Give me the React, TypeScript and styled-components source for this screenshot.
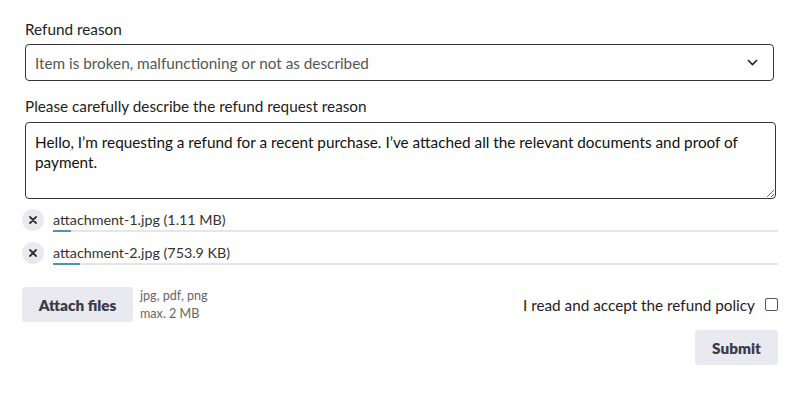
import { createGlobalStyle, styled } from "styled-components";

const GlobalStyle = createGlobalStyle`
  html, body {
    margin: 0;
    padding: 0;
    background: #ffffff;
  }
  body {
    font-family: "Lato", "Noto Sans", sans-serif;
    color: #222;
  }
`;

const Form = styled.form`
  width: 756px;
  padding: 19px 0 0 22px;
  display: flex;
  flex-direction: column;
`;

const Label = styled.label`
  display: block;
  margin-left: 3px;
  font-size: 15.3px;
  line-height: 20px;
  color: #222;
`;

const SelectBox = styled.div`
  position: relative;
  margin: 5px 0 15px 3px;
  width: 749px;
  height: 37px;
  box-sizing: border-box;
  border: 1px solid #3a3535;
  border-radius: 4px;
  display: flex;
  align-items: center;
  padding: 0 9px;
  font-size: 15.3px;
  color: #555;
`;

const Chevron = styled.svg`
  margin-left: auto;
  margin-right: 6px;
`;

const TextArea = styled.textarea`
  margin: 6px 0 10px 3px;
  width: 751px;
  height: 77px;
  box-sizing: border-box;
  border: 1px solid #3a3535;
  border-radius: 4px;
  padding: 9px 9px;
  font-family: inherit;
  font-size: 15.3px;
  line-height: 20px;
  color: #111;
  resize: vertical;
  outline: none;
`;

const FileList = styled.ul`
  list-style: none;
  margin: 0;
  padding: 0;
  display: flex;
  flex-direction: column;
  gap: 10px;
`;

const FileRow = styled.li`
  display: flex;
  align-items: flex-start;
  gap: 9px;
`;

const RemoveButton = styled.button`
  width: 22px;
  height: 22px;
  flex: none;
  border: none;
  border-radius: 50%;
  background: #e9e9ef;
  padding: 0;
  display: flex;
  align-items: center;
  justify-content: center;
  cursor: pointer;
`;

const FileInfo = styled.div`
  flex: 1;
  display: flex;
  flex-direction: column;
`;

const FileName = styled.span`
  font-size: 14.3px;
  line-height: 21px;
  color: #333;
`;

const Track = styled.div`
  height: 2px;
  background: #e6e6e6;
`;

const Progress = styled.div`
  height: 2px;
  background: #4b94b2;
`;

const ActionRow = styled.div`
  margin-top: 22px;
  height: 35px;
  display: flex;
  align-items: flex-start;
`;

const GreyButton = styled.button`
  height: 35px;
  border: none;
  border-radius: 3px;
  background: #e9e9f0;
  font-family: inherit;
  font-weight: 800;
  font-size: 15.3px;
  color: #3b3b48;
  cursor: pointer;
`;

const AttachButton = styled(GreyButton)`
  width: 111px;
`;

const Hints = styled.div`
  margin-left: 7px;
  display: flex;
  flex-direction: column;
  font-size: 12.6px;
  line-height: 18px;
  color: #666;
`;

const Consent = styled.label`
  margin-left: auto;
  align-self: center;
  display: flex;
  align-items: center;
  gap: 10px;
  font-size: 15.3px;
  color: #222;
`;

const Check = styled.input`
  width: 13px;
  height: 13px;
  margin: 0;
  appearance: none;
  border: 1px solid #555;
  border-radius: 2px;
  box-sizing: border-box;
`;

const SubmitRow = styled.div`
  margin-top: 8px;
  display: flex;
  justify-content: flex-end;
`;

const SubmitButton = styled(GreyButton)`
  width: 83px;
`;

const files = [
  { name: "attachment-1.jpg (1.11 MB)", progress: 18 },
  { name: "attachment-2.jpg (753.9 KB)", progress: 27 },
];

export default function App() {
  return (
    <>
      <GlobalStyle />
      <Form onSubmit={(e) => e.preventDefault()}>
        <Label>Refund reason</Label>
        <SelectBox>
          Item is broken, malfunctioning or not as described
          <Chevron width="11" height="7" viewBox="0 0 11 7">
            <path d="M1 1l4.5 4.5L10 1" fill="none" stroke="#222" strokeWidth="1.6" />
          </Chevron>
        </SelectBox>
        <Label>Please carefully describe the refund request reason</Label>
        <TextArea
          defaultValue="Hello, I’m requesting a refund for a recent purchase. I’ve attached all the relevant documents and proof of payment."
        />
        <FileList>
          {files.map((file) => (
            <FileRow key={file.name}>
              <RemoveButton type="button" aria-label="Remove">
                <svg width="8" height="8" viewBox="0 0 8 8">
                  <path d="M1 1l6 6M7 1L1 7" stroke="#333" strokeWidth="1.8" strokeLinecap="round" />
                </svg>
              </RemoveButton>
              <FileInfo>
                <FileName>{file.name}</FileName>
                <Track>
                  <Progress style={{ width: file.progress }} />
                </Track>
              </FileInfo>
            </FileRow>
          ))}
        </FileList>
        <ActionRow>
          <AttachButton type="button">Attach files</AttachButton>
          <Hints>
            <span>jpg, pdf, png</span>
            <span>max. 2 MB</span>
          </Hints>
          <Consent>
            I read and accept the refund policy
            <Check type="checkbox" />
          </Consent>
        </ActionRow>
        <SubmitRow>
          <SubmitButton type="submit">Submit</SubmitButton>
        </SubmitRow>
      </Form>
    </>
  );
}
